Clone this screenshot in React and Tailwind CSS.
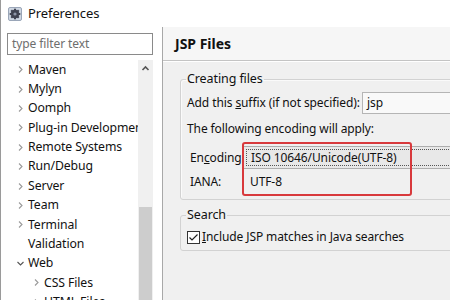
import React from "react";

const font = { fontFamily: '"Noto Sans", "Open Sans", sans-serif' };

function Chevron({ down }) {
  return down ? (
    <svg width="9" height="9" viewBox="0 0 9 9" className="shrink-0">
      <path d="M1.5 3 L4.5 6 L7.5 3" fill="none" stroke="#555" strokeWidth="1.1" />
    </svg>
  ) : (
    <svg width="9" height="9" viewBox="0 0 9 9" className="shrink-0">
      <path d="M3 1.5 L6 4.5 L3 7.5" fill="none" stroke="#9a9a9a" strokeWidth="1.1" />
    </svg>
  );
}

const items = [
  { t: "Maven", c: "r" },
  { t: "Mylyn", c: "r" },
  { t: "Oomph", c: "r" },
  { t: "Plug-in Development", c: "r" },
  { t: "Remote Systems", c: "r" },
  { t: "Run/Debug", c: "r" },
  { t: "Server", c: "r" },
  { t: "Team", c: "r" },
  { t: "Terminal", c: "r" },
  { t: "Validation", c: "n" },
  { t: "Web", c: "d" },
  { t: "CSS Files", c: "r", lvl: 1 },
  { t: "HTML Files", c: "r", lvl: 1 },
];

export default function App() {
  return (
    <div
      className="w-[450px] h-[300px] overflow-hidden bg-white flex flex-col text-[12px] tracking-[-0.1px] text-[#111] border-l border-[#9a9a9a]"
      style={font}
    >
      {/* title bar */}
      <div className="h-[27px] shrink-0 flex items-center pl-[7px] gap-[6px]">
        <svg width="14" height="14" viewBox="0 0 14 14">
          <rect x="0.5" y="0.5" width="13" height="13" rx="1.5" fill="#cfd7e3" stroke="#9aa6b8" />
          <g transform="translate(7 7)">
            {[0, 45, 90, 135].map((a) => (
              <rect key={a} x="-1.1" y="-5.3" width="2.2" height="10.6" fill="#3f4250" transform={`rotate(${a})`} />
            ))}
            <circle r="4.2" fill="#3f4250" />
            <circle r="1.6" fill="#8e96a8" />
          </g>
        </svg>
        <span className="text-[13px] text-[#111] leading-none">Preferences</span>
      </div>

      <div className="flex flex-1 min-h-0">
        {/* left pane */}
        <div className="w-[161px] shrink-0 pl-[6px] pt-[6px] flex flex-col">
          <div className="w-[146px] h-[22px] border border-[#8a8a8a] flex items-center pl-[4px] text-[#6e6e6e]">
            type filter text
          </div>
          <div className="flex mt-[5px] flex-1 min-h-0">
            <div className="w-[131px] overflow-hidden">
              {items.map((it) => (
                <div
                  key={it.t}
                  className={`h-[19.4px] flex items-center whitespace-nowrap text-[12.25px] ${it.lvl ? "pl-[25px]" : "pl-[9px]"}`}
                >
                  <span className="w-[12px] flex items-center shrink-0">
                    {it.c === "r" && <Chevron />}
                    {it.c === "d" && <Chevron down />}
                  </span>
                  <span>{it.t}</span>
                </div>
              ))}
            </div>
            <div className="w-[15px] bg-[#f0f0f0] flex flex-col items-center">
              <svg width="9" height="9" viewBox="0 0 9 9" className="mt-[4px]">
                <path d="M1.5 6 L4.5 3 L7.5 6" fill="none" stroke="#555" strokeWidth="1.6" />
              </svg>
              <div className="mt-[134px] w-[13px] flex-1 bg-[#cdcdcd]"></div>
            </div>
          </div>
        </div>

        {/* right pane */}
        <div className="flex-1 min-w-0 overflow-hidden border-l border-[#a8a8a8] bg-[#f0f0f0] flex flex-col">
          <div className="h-[34px] shrink-0 bg-[#f6f6f6] border-b border-[#c4c4c4] shadow-[0_1px_0_#ffffff] flex items-center pl-[12px]">
            <span className="font-bold text-[14px] tracking-normal text-[#111]">JSP Files</span>
          </div>
          <div className="pl-[17px] w-[330px]">
            <fieldset className="mt-[10px] border border-[#d2d2d2] rounded-[3px] pl-[6px] pb-[9px] shadow-[inset_1px_1px_0_#fafafa]">
              <legend className="ml-[-1px] px-[1px] leading-[16px] text-[12.5px]">Creating files</legend>
              <div className="mt-[5px] flex items-center h-[22px]">
                <span className="w-[175px] shrink-0 whitespace-nowrap">
                  Add this <span className="underline">s</span>uffix (if not specified):
                </span>
                <div className="flex-1 h-[22px] border border-[#b5b5b5] bg-[#f9f9f9] flex items-center pl-[4px]">
                  jsp
                </div>
              </div>
              <div className="mt-[7px] leading-[16px] whitespace-nowrap">The following encoding will apply:</div>
              <div className="relative">
                <div className="mt-[9px] flex items-center h-[23px] pl-[3px]">
                  <span className="w-[53px] shrink-0">
                    En<span className="underline">c</span>oding:
                  </span>
                  <div className="flex-1 h-[23px] border border-[#adadad] bg-[#e8e8e8] p-[2px]">
                    <div className="h-full border border-dotted border-[#555] flex items-center pl-[4px] whitespace-nowrap">
                      ISO 10646/Unicode(UTF-8)
                    </div>
                  </div>
                </div>
                <div className="mt-[5px] flex items-center h-[16px] pl-[3px]">
                  <span className="w-[60px] shrink-0">IANA:</span>
                  <span>UTF-8</span>
                </div>
                <div className="absolute left-[55px] top-[-4px] w-[170px] h-[54px] border-2 border-[#d8393c] rounded-[3px]"></div>
              </div>
            </fieldset>

            <fieldset className="mt-[7px] border border-[#d2d2d2] rounded-[3px] pl-[6px] pb-[5px]">
              <legend className="ml-[-1px] px-[1px] leading-[16px] text-[12.5px]">Search</legend>
              <div className="mt-[6px] flex items-center h-[16px] gap-[2px]">
                <svg width="13" height="13" viewBox="0 0 13 13" className="shrink-0">
                  <rect x="0.5" y="0.5" width="12" height="12" fill="#ffffff" stroke="#333" />
                  <path d="M2.5 6.5 L5 9 L10.5 3.5" fill="none" stroke="#222" strokeWidth="1.2" />
                </svg>
                <span className="whitespace-nowrap">
                  <span className="underline">I</span>nclude JSP matches in Java searches
                </span>
              </div>
            </fieldset>
          </div>
        </div>
      </div>
    </div>
  );
}
